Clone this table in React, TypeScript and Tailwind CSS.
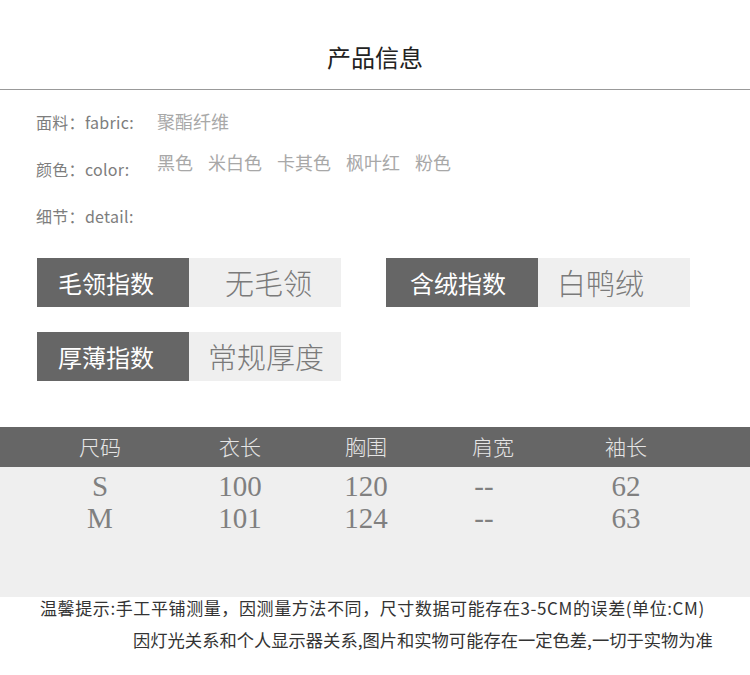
import React from "react";

const cjk = "font-['Noto_Sans_CJK_SC','Noto_Sans',sans-serif]";

const colorOptions = ["黑色", "米白色", "卡其色", "枫叶红", "粉色"];

const sizeRows = [
  { size: "S", length: "100", chest: "120", shoulder: "--", sleeve: "62" },
  { size: "M", length: "101", chest: "124", shoulder: "--", sleeve: "63" },
];

const cols = ["w-[140px]", "w-[140px]", "w-[112px]", "w-[142px]", "w-[124px]"];

const Tag = ({
  label,
  value,
  labelPad,
  valuePad,
}: {
  label: string;
  value: string;
  labelPad: string;
  valuePad: string;
}) => (
  <div className="flex h-[49px] w-[304px]">
    <div
      className={`flex w-[152px] items-center bg-[#666666] text-[24px] text-white ${labelPad}`}
    >
      {label}
    </div>
    <div
      className={`flex w-[152px] items-center bg-[#efefef] text-[29px] font-light text-[#7a7a7a] ${valuePad}`}
    >
      {value}
    </div>
  </div>
);

const App = () => {
  return (
    <div className={`h-[675px] w-[750px] overflow-hidden bg-white ${cjk}`}>
      {/* Title */}
      <div className="pt-[42px] text-center text-[24px] leading-[30px] text-[#222]">
        产品信息
      </div>
      <div className="mt-[17px] h-px w-full bg-[#999999]" />

      {/* Info rows */}
      <div className="mt-[8px] flex flex-col pl-[36px] text-[16px] text-[#7d7d7d]">
        <div className="flex h-[47px] items-center">
          <span className="w-[121px] tracking-[0.3px]">面料：fabric:</span>
          <span className="text-[18px] text-[#a8a8a8]">聚酯纤维</span>
        </div>
        <div className="flex h-[47px] items-center">
          <span className="w-[121px] tracking-[0.3px]">颜色：color:</span>
          <div className="mb-[12px] flex gap-[15px] text-[18px] text-[#a8a8a8]">
            {colorOptions.map((c) => (
              <span key={c}>{c}</span>
            ))}
          </div>
        </div>
        <div className="flex h-[47px] items-center">
          <span className="tracking-[0.3px]">细节：detail:</span>
        </div>
      </div>

      {/* Tags */}
      <div className="mt-[19px] flex flex-col gap-[25px] pl-[37px]">
        <div className="flex gap-[45px]">
          <Tag label="毛领指数" value="无毛领" labelPad="pl-[21px]" valuePad="pl-[36px]" />
          <Tag label="含绒指数" value="白鸭绒" labelPad="pl-[24px]" valuePad="pl-[19px]" />
        </div>
        <Tag label="厚薄指数" value="常规厚度" labelPad="pl-[21px]" valuePad="pl-[19px]" />
      </div>

      {/* Size table */}
      <div className="mt-[46px]">
        <div className="flex h-[40px] items-center bg-[#666666] pl-[30px] text-[21px] font-light text-[#e6e6e6]">
          {["尺码", "衣长", "胸围", "肩宽", "袖长"].map((h, i) => (
            <div key={h} className={`${cols[i]} text-center`}>
              {h}
            </div>
          ))}
        </div>
        <div className="h-[130px] bg-[#efefef] pt-[3px] font-['Liberation_Serif',serif] text-[29px] leading-[32px] text-[#808080]">
          {sizeRows.map((r) => (
            <div key={r.size} className="flex pl-[30px]">
              <div className={`${cols[0]} text-center`}>{r.size}</div>
              <div className={`${cols[1]} text-center`}>{r.length}</div>
              <div className={`${cols[2]} text-center`}>{r.chest}</div>
              <div className={`${cols[3]} pr-[18px] text-center`}>{r.shoulder}</div>
              <div className={`${cols[4]} text-center`}>{r.sleeve}</div>
            </div>
          ))}
        </div>
      </div>

      {/* Notes */}
      <div className="leading-[22px] text-[#333]">
        <p className="pl-[40px] text-[17px] tracking-[0.6px]">
          温馨提示:手工平铺测量，因测量方法不同，尺寸数据可能存在3-5CM的误差(单位:CM)
        </p>
        <p className="mt-[10px] pl-[133px] text-[17.3px]">
          因灯光关系和个人显示器关系,图片和实物可能存在一定色差,一切于实物为准
        </p>
      </div>
    </div>
  );
};

export default App;
